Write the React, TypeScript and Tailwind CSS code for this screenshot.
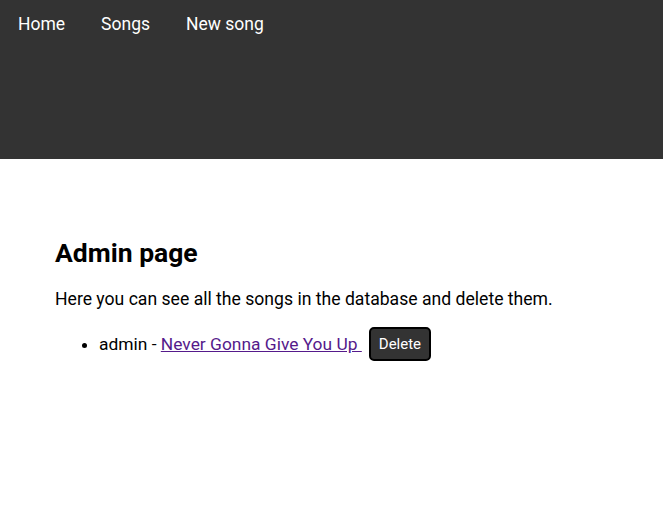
export default function App() {
  return (
    <div className="min-h-screen bg-white font-['Roboto',sans-serif] text-black">
      <header className="h-[159px] bg-[#333333]">
        <nav className="flex">
          <a href="#" className="px-[18px] py-[11px] text-[17.5px] text-white">
            Home
          </a>
          <a href="#" className="px-[18px] py-[11px] text-[17.5px] text-white">
            Songs
          </a>
          <a href="#" className="px-[18px] py-[11px] text-[17.5px] text-white">
            New song
          </a>
        </nav>
      </header>

      <main className="px-[55px] pt-[78px]">
        <h1 className="text-[26.5px] font-bold leading-[32px]">Admin page</h1>
        <p className="mt-[20px] text-[17.6px] leading-[21px]">
          Here you can see all the songs in the database and delete them.
        </p>
        <ul className="mt-[17px] list-disc pl-[44px] text-[17.4px]">
          <li>
            <div className="flex items-center">
              <span>admin -&nbsp;</span>
              <a href="#" className="text-[#551a8b] underline">
                Never Gonna Give You Up&nbsp;
              </a>
              <button
                type="button"
                className="ml-[7px] h-[34px] rounded-[5px] border-2 border-black bg-[#333333] px-[8px] text-[15px] text-white"
              >
                Delete
              </button>
            </div>
          </li>
        </ul>
      </main>
    </div>
  );
}
